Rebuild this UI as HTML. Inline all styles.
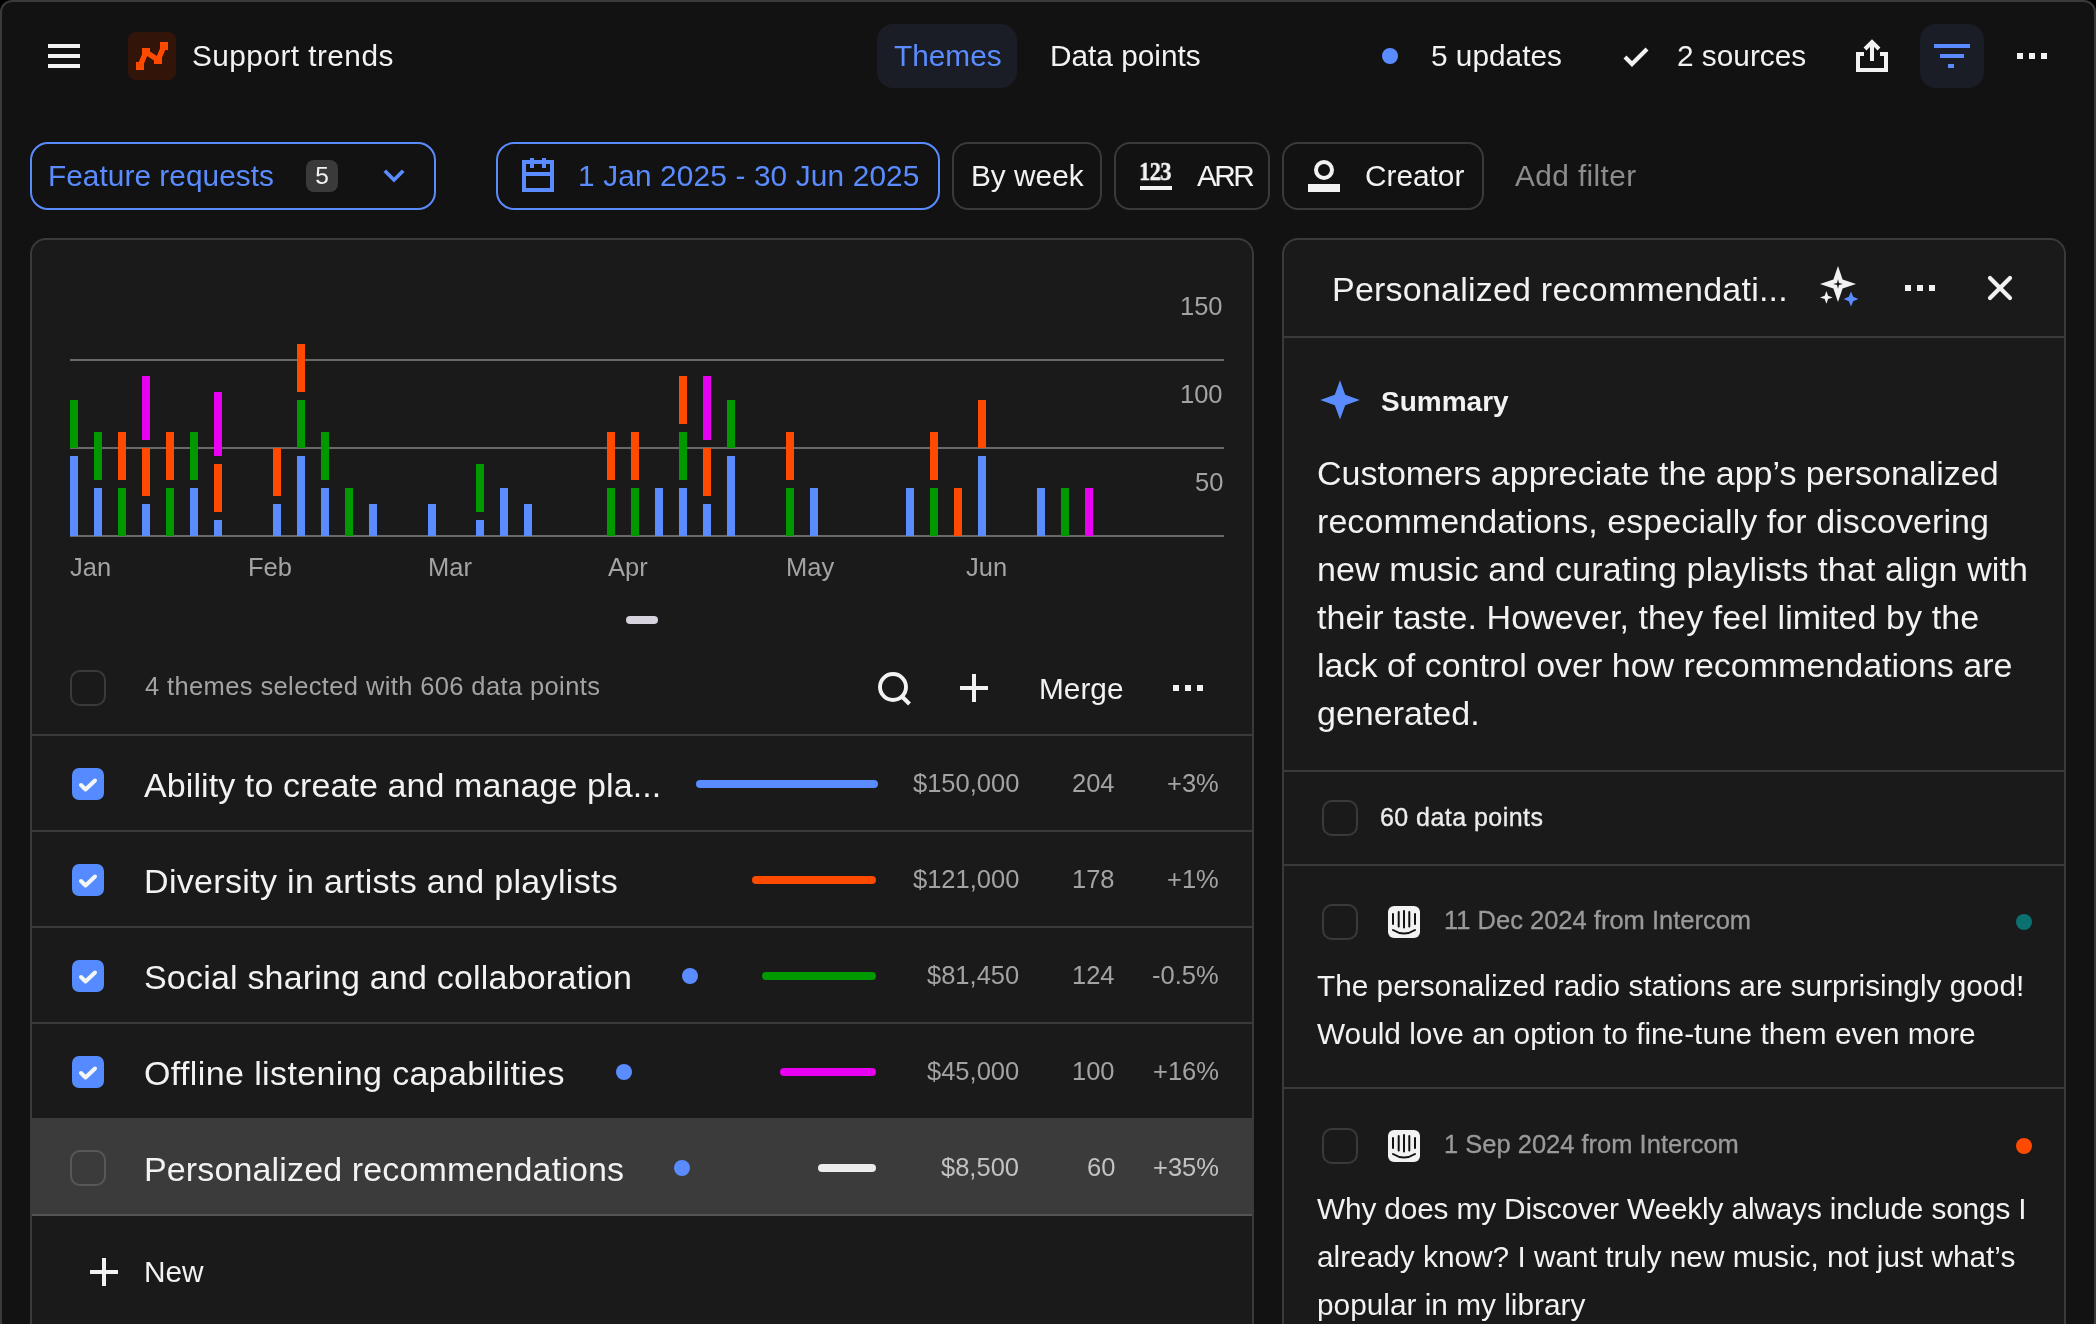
<!DOCTYPE html>
<html><head><meta charset="utf-8">
<style>
html,body{margin:0;padding:0;background:#000;}
body{width:2096px;height:1324px;overflow:hidden;position:relative;font-family:"Liberation Sans",sans-serif;}
#win{position:absolute;left:0;top:0;width:2092px;height:1360px;border:2px solid #3a3a3a;border-radius:12px;background:#121212;overflow:hidden;}
.t{position:absolute;white-space:nowrap;line-height:1;will-change:transform;}
.r{position:absolute;}
i{position:absolute;width:8px;}
</style></head><body>
<div id="win"></div>
<div class="r" style="left:48px;top:44px;width:32px;height:4px;background:#f2f2f2;"></div>
<div class="r" style="left:48px;top:54px;width:32px;height:4px;background:#f2f2f2;"></div>
<div class="r" style="left:48px;top:64px;width:32px;height:4px;background:#f2f2f2;"></div>
<div class="r" style="left:128px;top:32px;width:48px;height:48px;background:#321409;border-radius:8px;"></div>
<svg class="r" style="left:128px;top:32px" width="48" height="48" viewBox="0 0 48 48"><g fill="#ff4a00"><rect x="8" y="30" width="8" height="8"/><rect x="14" y="16" width="8" height="8"/><rect x="26" y="24" width="8" height="8"/><rect x="32" y="10" width="8" height="8"/></g><polyline points="12,34 18,20 30,28 36,14" fill="none" stroke="#ff4a00" stroke-width="5.5" stroke-linejoin="miter"/></svg>
<div class="t" style="top:40.77px;font-size:29.8px;color:#f2f2f2;letter-spacing:0.45px;left:192px;">Support trends</div>
<div class="r" style="left:877px;top:24px;width:140px;height:64px;background:#1a1d26;border-radius:16px;"></div>
<div class="t" style="top:40.77px;font-size:29.8px;color:#5a8cff;left:894px;">Themes</div>
<div class="t" style="top:40.77px;font-size:29.8px;color:#f2f2f2;left:1050px;">Data points</div>
<div class="r" style="left:1382px;top:48px;width:16px;height:16px;background:#5a8cff;border-radius:8px;"></div>
<div class="t" style="top:40.77px;font-size:29.8px;color:#f2f2f2;left:1431px;">5 updates</div>
<svg class="r" style="left:1620px;top:44px" width="32" height="26" viewBox="0 0 32 26"><polyline points="5,13 12,20 27,5" fill="none" stroke="#f2f2f2" stroke-width="4.2"/></svg>
<div class="t" style="top:40.77px;font-size:29.8px;color:#f2f2f2;left:1677px;">2 sources</div>
<svg class="r" style="left:1852px;top:36px" width="40" height="40" viewBox="0 0 40 40"><path d="M12 18 H6 V34 H34 V18 H28" fill="none" stroke="#f2f2f2" stroke-width="4"/><path d="M20 25 V7" stroke="#f2f2f2" stroke-width="4"/><path d="M13 13 L20 6 L27 13" fill="none" stroke="#f2f2f2" stroke-width="4"/></svg>
<div class="r" style="left:1920px;top:24px;width:64px;height:64px;background:#1a1d26;border-radius:16px;"></div>
<div class="r" style="left:1934px;top:44px;width:36px;height:4px;background:#5a8cff;"></div>
<div class="r" style="left:1940px;top:54px;width:24px;height:4px;background:#5a8cff;"></div>
<div class="r" style="left:1948px;top:64px;width:6px;height:4px;background:#5a8cff;"></div>
<div class="r" style="left:2017px;top:53px;width:6px;height:6px;background:#f2f2f2;"></div>
<div class="r" style="left:2029px;top:53px;width:6px;height:6px;background:#f2f2f2;"></div>
<div class="r" style="left:2041px;top:53px;width:6px;height:6px;background:#f2f2f2;"></div>
<div class="r" style="left:30px;top:142px;width:402px;height:64px;border:2px solid #5a8cff;border-radius:18px;background:transparent"></div>
<div class="t" style="top:160.77px;font-size:29.8px;color:#5a8cff;letter-spacing:0.05px;left:48px;">Feature requests</div>
<div class="r" style="left:306px;top:160px;width:32px;height:32px;background:#3a3a3a;border-radius:8px;"></div>
<div class="t" style="top:163.76px;font-size:24.5px;color:#f2f2f2;left:322px;transform:translateX(-50%);">5</div>
<svg class="r" style="left:380px;top:164px" width="28" height="24" viewBox="0 0 28 24"><polyline points="4.8,6.8 14,16 23.2,6.8" fill="none" stroke="#5a8cff" stroke-width="3.7"/></svg>
<div class="r" style="left:496px;top:142px;width:440px;height:64px;border:2px solid #5a8cff;border-radius:18px;background:transparent"></div>
<svg class="r" style="left:520px;top:156px" width="36" height="38" viewBox="0 0 36 38"><rect x="4" y="6" width="28" height="28" fill="none" stroke="#5a8cff" stroke-width="4"/><rect x="4" y="16" width="28" height="4" fill="#5a8cff"/><rect x="10" y="2" width="4" height="10" fill="#5a8cff"/><rect x="22" y="2" width="4" height="10" fill="#5a8cff"/></svg>
<div class="t" style="top:160.77px;font-size:29.8px;color:#5a8cff;letter-spacing:0.15px;left:578px;">1 Jan 2025 - 30 Jun 2025</div>
<div class="r" style="left:952px;top:142px;width:146px;height:64px;border:2px solid #3a3a3a;border-radius:16px;background:transparent"></div>
<div class="t" style="top:160.77px;font-size:29.8px;color:#f2f2f2;left:971px;">By week</div>
<div class="r" style="left:1114px;top:142px;width:152px;height:64px;border:2px solid #3a3a3a;border-radius:16px;background:transparent"></div>
<div class="t" style="top:158.99px;font-size:26px;color:#f2f2f2;font-weight:700;left:1139px;font-family:'Liberation Serif',serif;letter-spacing:-0.6px;-webkit-text-stroke:0.5px #f2f2f2;transform:scaleX(0.86);transform-origin:0 0;">123</div>
<div class="r" style="left:1140px;top:186px;width:32px;height:4px;background:#f2f2f2;"></div>
<div class="t" style="top:160.77px;font-size:29.8px;color:#f2f2f2;letter-spacing:-2.6px;left:1197px;">ARR</div>
<div class="r" style="left:1282px;top:142px;width:198px;height:64px;border:2px solid #3a3a3a;border-radius:16px;background:transparent"></div>
<svg class="r" style="left:1306px;top:158px" width="36" height="36" viewBox="0 0 36 36"><circle cx="18" cy="12" r="8" fill="none" stroke="#f2f2f2" stroke-width="4"/><rect x="2" y="26" width="32" height="8" fill="#f2f2f2"/></svg>
<div class="t" style="top:160.77px;font-size:29.8px;color:#f2f2f2;left:1365px;">Creator</div>
<div class="t" style="top:160.77px;font-size:29.8px;color:#8c8c8c;letter-spacing:0.4px;left:1515px;">Add filter</div>
<div class="r" style="left:30px;top:238px;width:1220px;height:1116px;border:2px solid #3a3a3a;border-radius:16px;background:#1a1a1a"></div>
<div class="r" style="left:70px;top:359px;width:1154px;height:2px;background:#686868;"></div>
<div class="r" style="left:70px;top:447px;width:1154px;height:2px;background:#686868;"></div>
<div class="r" style="left:70px;top:535px;width:1154px;height:2px;background:#686868;"></div>
<div class="t" style="top:294.41px;font-size:25.5px;color:#a3a3a3;right:873px;">150</div>
<div class="t" style="top:382.41px;font-size:25.5px;color:#a3a3a3;right:873px;">100</div>
<div class="t" style="top:470.41px;font-size:25.5px;color:#a3a3a3;right:873px;">50</div>
<i style="left:70px;top:456px;height:80px;background:#5a8cff"></i>
<i style="left:70px;top:400px;height:48px;background:#009a00"></i>
<i style="left:94px;top:488px;height:48px;background:#5a8cff"></i>
<i style="left:94px;top:432px;height:48px;background:#009a00"></i>
<i style="left:118px;top:488px;height:48px;background:#009a00"></i>
<i style="left:118px;top:432px;height:48px;background:#ff4a00"></i>
<i style="left:142px;top:504px;height:32px;background:#5a8cff"></i>
<i style="left:142px;top:448px;height:48px;background:#ff4a00"></i>
<i style="left:142px;top:376px;height:64px;background:#e800f0"></i>
<i style="left:166px;top:488px;height:48px;background:#009a00"></i>
<i style="left:166px;top:432px;height:48px;background:#ff4a00"></i>
<i style="left:190px;top:488px;height:48px;background:#5a8cff"></i>
<i style="left:190px;top:432px;height:48px;background:#009a00"></i>
<i style="left:214px;top:520px;height:16px;background:#5a8cff"></i>
<i style="left:214px;top:464px;height:48px;background:#ff4a00"></i>
<i style="left:214px;top:392px;height:64px;background:#e800f0"></i>
<i style="left:273px;top:504px;height:32px;background:#5a8cff"></i>
<i style="left:273px;top:448px;height:48px;background:#ff4a00"></i>
<i style="left:297px;top:456px;height:80px;background:#5a8cff"></i>
<i style="left:297px;top:400px;height:48px;background:#009a00"></i>
<i style="left:297px;top:344px;height:48px;background:#ff4a00"></i>
<i style="left:321px;top:488px;height:48px;background:#5a8cff"></i>
<i style="left:321px;top:432px;height:48px;background:#009a00"></i>
<i style="left:345px;top:488px;height:48px;background:#009a00"></i>
<i style="left:369px;top:504px;height:32px;background:#5a8cff"></i>
<i style="left:428px;top:504px;height:32px;background:#5a8cff"></i>
<i style="left:476px;top:520px;height:16px;background:#5a8cff"></i>
<i style="left:476px;top:464px;height:48px;background:#009a00"></i>
<i style="left:500px;top:488px;height:48px;background:#5a8cff"></i>
<i style="left:524px;top:504px;height:32px;background:#5a8cff"></i>
<i style="left:607px;top:488px;height:48px;background:#009a00"></i>
<i style="left:607px;top:432px;height:48px;background:#ff4a00"></i>
<i style="left:631px;top:488px;height:48px;background:#009a00"></i>
<i style="left:631px;top:432px;height:48px;background:#ff4a00"></i>
<i style="left:655px;top:488px;height:48px;background:#5a8cff"></i>
<i style="left:679px;top:488px;height:48px;background:#5a8cff"></i>
<i style="left:679px;top:432px;height:48px;background:#009a00"></i>
<i style="left:679px;top:376px;height:48px;background:#ff4a00"></i>
<i style="left:703px;top:504px;height:32px;background:#5a8cff"></i>
<i style="left:703px;top:448px;height:48px;background:#ff4a00"></i>
<i style="left:703px;top:376px;height:64px;background:#e800f0"></i>
<i style="left:727px;top:456px;height:80px;background:#5a8cff"></i>
<i style="left:727px;top:400px;height:48px;background:#009a00"></i>
<i style="left:786px;top:488px;height:48px;background:#009a00"></i>
<i style="left:786px;top:432px;height:48px;background:#ff4a00"></i>
<i style="left:810px;top:488px;height:48px;background:#5a8cff"></i>
<i style="left:906px;top:488px;height:48px;background:#5a8cff"></i>
<i style="left:930px;top:488px;height:48px;background:#009a00"></i>
<i style="left:930px;top:432px;height:48px;background:#ff4a00"></i>
<i style="left:954px;top:488px;height:48px;background:#ff4a00"></i>
<i style="left:978px;top:456px;height:80px;background:#5a8cff"></i>
<i style="left:978px;top:400px;height:48px;background:#ff4a00"></i>
<i style="left:1037px;top:488px;height:48px;background:#5a8cff"></i>
<i style="left:1061px;top:488px;height:48px;background:#009a00"></i>
<i style="left:1085px;top:488px;height:48px;background:#e800f0"></i>

<div class="t" style="top:554.91px;font-size:25.5px;color:#a3a3a3;left:70px;">Jan</div>
<div class="t" style="top:554.91px;font-size:25.5px;color:#a3a3a3;left:248px;">Feb</div>
<div class="t" style="top:554.91px;font-size:25.5px;color:#a3a3a3;left:428px;">Mar</div>
<div class="t" style="top:554.91px;font-size:25.5px;color:#a3a3a3;left:608px;">Apr</div>
<div class="t" style="top:554.91px;font-size:25.5px;color:#a3a3a3;left:786px;">May</div>
<div class="t" style="top:554.91px;font-size:25.5px;color:#a3a3a3;left:966px;">Jun</div>
<div class="r" style="left:626px;top:616px;width:32px;height:8px;background:#d6d3dc;border-radius:4px;"></div>
<div class="r" style="left:70px;top:670px;width:32px;height:32px;border:2px solid #3a3a3a;border-radius:10px;background:transparent"></div>
<div class="t" style="top:674.41px;font-size:25.5px;color:#a3a3a3;letter-spacing:0.38px;left:145px;">4 themes selected with 606 data points</div>
<svg class="r" style="left:872px;top:668px" width="44" height="40" viewBox="0 0 44 40"><circle cx="21" cy="19" r="13" fill="none" stroke="#f2f2f2" stroke-width="3.9"/><path d="M30 28.5 L37.5 36" stroke="#f2f2f2" stroke-width="4"/></svg>
<svg class="r" style="left:958px;top:672px" width="32" height="32" viewBox="0 0 32 32"><path d="M16 2 V30 M2 16 H30" stroke="#f2f2f2" stroke-width="4"/></svg>
<div class="t" style="top:673.77px;font-size:29.8px;color:#f2f2f2;left:1039px;">Merge</div>
<div class="r" style="left:1173px;top:685px;width:6px;height:6px;background:#f2f2f2;"></div>
<div class="r" style="left:1185px;top:685px;width:6px;height:6px;background:#f2f2f2;"></div>
<div class="r" style="left:1197px;top:685px;width:6px;height:6px;background:#f2f2f2;"></div>
<div class="r" style="left:32px;top:734px;width:1220px;height:2px;background:#3a3a3a;"></div>
<div class="r" style="left:32px;top:830px;width:1220px;height:2px;background:#3a3a3a;"></div>
<div class="r" style="left:32px;top:926px;width:1220px;height:2px;background:#3a3a3a;"></div>
<div class="r" style="left:32px;top:1022px;width:1220px;height:2px;background:#3a3a3a;"></div>
<div class="r" style="left:32px;top:1118px;width:1220px;height:2px;background:#3a3a3a;"></div>
<div class="r" style="left:32px;top:1118px;width:1220px;height:96px;background:#3b3b3b;"></div>
<div class="r" style="left:32px;top:1214px;width:1220px;height:2px;background:#545454;"></div>
<div class="r" style="left:72px;top:768px;width:32px;height:32px;background:#558bff;border-radius:7px;"></div>
<svg class="r" style="left:72px;top:768px" width="32" height="32" viewBox="0 0 32 32"><polyline points="9,17 13.5,21.5 23,12.5" fill="none" stroke="#f5f5f5" stroke-width="4" stroke-linecap="round" stroke-linejoin="round"/></svg>
<div class="t" style="top:767.72px;font-size:34.0px;color:#f2f2f2;letter-spacing:0.09px;left:144px;">Ability to create and manage pla...</div>
<div class="r" style="left:696px;top:780px;width:182px;height:8px;background:#5a8cff;border-radius:4px;"></div>
<div class="t" style="top:771.41px;font-size:25.5px;color:#a3a3a3;right:1077px;">$150,000</div>
<div class="t" style="top:771.41px;font-size:25.5px;color:#a3a3a3;right:981px;">204</div>
<div class="t" style="top:771.41px;font-size:25.5px;color:#a3a3a3;right:877px;">+3%</div>
<div class="r" style="left:72px;top:864px;width:32px;height:32px;background:#558bff;border-radius:7px;"></div>
<svg class="r" style="left:72px;top:864px" width="32" height="32" viewBox="0 0 32 32"><polyline points="9,17 13.5,21.5 23,12.5" fill="none" stroke="#f5f5f5" stroke-width="4" stroke-linecap="round" stroke-linejoin="round"/></svg>
<div class="t" style="top:863.72px;font-size:34.0px;color:#f2f2f2;letter-spacing:0.33px;left:144px;">Diversity in artists and playlists</div>
<div class="r" style="left:752px;top:876px;width:124px;height:8px;background:#ff4a00;border-radius:4px;"></div>
<div class="t" style="top:867.41px;font-size:25.5px;color:#a3a3a3;right:1077px;">$121,000</div>
<div class="t" style="top:867.41px;font-size:25.5px;color:#a3a3a3;right:981px;">178</div>
<div class="t" style="top:867.41px;font-size:25.5px;color:#a3a3a3;right:877px;">+1%</div>
<div class="r" style="left:72px;top:960px;width:32px;height:32px;background:#558bff;border-radius:7px;"></div>
<svg class="r" style="left:72px;top:960px" width="32" height="32" viewBox="0 0 32 32"><polyline points="9,17 13.5,21.5 23,12.5" fill="none" stroke="#f5f5f5" stroke-width="4" stroke-linecap="round" stroke-linejoin="round"/></svg>
<div class="t" style="top:959.72px;font-size:34.0px;color:#f2f2f2;letter-spacing:0.19px;left:144px;">Social sharing and collaboration</div>
<div class="r" style="left:682px;top:968px;width:16px;height:16px;background:#5a8cff;border-radius:8px;"></div>
<div class="r" style="left:762px;top:972px;width:114px;height:8px;background:#009a00;border-radius:4px;"></div>
<div class="t" style="top:963.41px;font-size:25.5px;color:#a3a3a3;right:1077px;">$81,450</div>
<div class="t" style="top:963.41px;font-size:25.5px;color:#a3a3a3;right:981px;">124</div>
<div class="t" style="top:963.41px;font-size:25.5px;color:#a3a3a3;right:877px;">-0.5%</div>
<div class="r" style="left:72px;top:1056px;width:32px;height:32px;background:#558bff;border-radius:7px;"></div>
<svg class="r" style="left:72px;top:1056px" width="32" height="32" viewBox="0 0 32 32"><polyline points="9,17 13.5,21.5 23,12.5" fill="none" stroke="#f5f5f5" stroke-width="4" stroke-linecap="round" stroke-linejoin="round"/></svg>
<div class="t" style="top:1055.72px;font-size:34.0px;color:#f2f2f2;letter-spacing:0.38px;left:144px;">Offline listening capabilities</div>
<div class="r" style="left:616px;top:1064px;width:16px;height:16px;background:#5a8cff;border-radius:8px;"></div>
<div class="r" style="left:780px;top:1068px;width:96px;height:8px;background:#e800f0;border-radius:4px;"></div>
<div class="t" style="top:1059.41px;font-size:25.5px;color:#a3a3a3;right:1077px;">$45,000</div>
<div class="t" style="top:1059.41px;font-size:25.5px;color:#a3a3a3;right:981px;">100</div>
<div class="t" style="top:1059.41px;font-size:25.5px;color:#a3a3a3;right:877px;">+16%</div>
<div class="r" style="left:70px;top:1150px;width:32px;height:32px;border:2px solid #585858;border-radius:10px;background:transparent"></div>
<div class="t" style="top:1151.72px;font-size:34.0px;color:#f2f2f2;letter-spacing:0.14px;left:144px;">Personalized recommendations</div>
<div class="r" style="left:674px;top:1160px;width:16px;height:16px;background:#5a8cff;border-radius:8px;"></div>
<div class="r" style="left:818px;top:1164px;width:58px;height:8px;background:#ececec;border-radius:4px;"></div>
<div class="t" style="top:1155.41px;font-size:25.5px;color:#c2c2c2;right:1077px;">$8,500</div>
<div class="t" style="top:1155.41px;font-size:25.5px;color:#c2c2c2;right:981px;">60</div>
<div class="t" style="top:1155.41px;font-size:25.5px;color:#c2c2c2;right:877px;">+35%</div>
<svg class="r" style="left:88px;top:1256px" width="32" height="32" viewBox="0 0 32 32"><path d="M16 2 V30 M2 16 H30" stroke="#f2f2f2" stroke-width="4"/></svg>
<div class="t" style="top:1256.77px;font-size:29.8px;color:#f2f2f2;left:144px;">New</div>
<div class="r" style="left:1282px;top:238px;width:780px;height:1116px;border:2px solid #3a3a3a;border-radius:16px;background:#1a1a1a"></div>
<div class="t" style="top:272.22px;font-size:34.0px;color:#f2f2f2;letter-spacing:0.22px;left:1332px;">Personalized recommendati...</div>
<svg class="r" style="left:1816px;top:262px" width="48" height="48" viewBox="0 0 48 48"><path d="M22.00 4.00 L26.60 17.40 L40.00 22.00 L26.60 26.60 L22.00 40.00 L17.40 26.60 L4.00 22.00 L17.40 17.40Z" fill="#f2f2f2"/><path d="M22.00 17.20 L23.00 21.00 L26.80 22.00 L23.00 23.00 L22.00 26.80 L21.00 23.00 L17.20 22.00 L21.00 21.00Z" fill="#1a1a1a"/><path d="M10.40 29.00 L12.10 33.70 L16.80 35.40 L12.10 37.10 L10.40 41.80 L8.70 37.10 L4.00 35.40 L8.70 33.70Z" fill="#f2f2f2"/><path d="M35.00 29.60 L37.20 34.80 L42.40 37.00 L37.20 39.20 L35.00 44.40 L32.80 39.20 L27.60 37.00 L32.80 34.80Z" fill="#5a8cff"/></svg>
<div class="r" style="left:1905px;top:285px;width:6px;height:6px;background:#f2f2f2;"></div>
<div class="r" style="left:1917px;top:285px;width:6px;height:6px;background:#f2f2f2;"></div>
<div class="r" style="left:1929px;top:285px;width:6px;height:6px;background:#f2f2f2;"></div>
<svg class="r" style="left:1984px;top:272px" width="32" height="32" viewBox="0 0 32 32"><path d="M6 6 L26 26 M26 6 L6 26" stroke="#f2f2f2" stroke-width="4.2" stroke-linecap="round"/></svg>
<div class="r" style="left:1284px;top:336px;width:780px;height:2px;background:#3a3a3a;"></div>
<svg class="r" style="left:1320px;top:380px" width="40" height="40" viewBox="0 0 40 40"><path d="M20 0.2 L25.2 14.8 L39.8 20 L25.2 25.2 L20 39.6 L14.8 25.2 L0.2 20 L14.8 14.8Z" fill="#5a8cff"/></svg>
<div class="t" style="top:387.60px;font-size:28px;color:#f2f2f2;font-weight:700;left:1381px;">Summary</div>
<div class="t" style="top:455.92px;font-size:34.0px;color:#f2f2f2;letter-spacing:0px;left:1317px;">Customers appreciate the app’s personalized</div>
<div class="t" style="top:503.92px;font-size:34.0px;color:#f2f2f2;letter-spacing:0.07px;left:1317px;">recommendations, especially for discovering</div>
<div class="t" style="top:551.92px;font-size:34.0px;color:#f2f2f2;letter-spacing:0.13px;left:1317px;">new music and curating playlists that align with</div>
<div class="t" style="top:599.92px;font-size:34.0px;color:#f2f2f2;letter-spacing:0.1px;left:1317px;">their taste. However, they feel limited by the</div>
<div class="t" style="top:647.92px;font-size:34.0px;color:#f2f2f2;letter-spacing:0px;left:1317px;">lack of control over how recommendations are</div>
<div class="t" style="top:695.92px;font-size:34.0px;color:#f2f2f2;letter-spacing:0px;left:1317px;">generated.</div>
<div class="r" style="left:1284px;top:770px;width:780px;height:2px;background:#3a3a3a;"></div>
<div class="r" style="left:1322px;top:800px;width:32px;height:32px;border:2px solid #3a3a3a;border-radius:10px;background:transparent"></div>
<div class="t" style="top:805.24px;font-size:25px;color:#ececec;letter-spacing:0.45px;left:1380px;-webkit-text-stroke:0.35px #ececec;">60 data points</div>
<div class="r" style="left:1284px;top:864px;width:780px;height:2px;background:#3a3a3a;"></div>
<div class="r" style="left:1322px;top:904px;width:32px;height:32px;border:2px solid #3a3a3a;border-radius:10px;background:transparent"></div>
<svg class="r" style="left:1388px;top:906px" width="32" height="32" viewBox="0 0 32 32"><rect x="0" y="0" width="32" height="32" rx="6" fill="#f2f2f2"/><g stroke="#111" stroke-width="2" stroke-linecap="round"><path d="M5 8 V18"/><path d="M10.7 6 V20.5"/><path d="M16 5 V21.5"/><path d="M21.3 6 V20.5"/><path d="M27 8 V18"/></g><path d="M5 24 Q16 31 27 24" fill="none" stroke="#111" stroke-width="2" stroke-linecap="round"/></svg>
<div class="t" style="top:908.41px;font-size:25.5px;color:#9a9a9a;left:1444px;-webkit-text-stroke:0.3px #9a9a9a;">11 Dec 2024 from Intercom</div>
<div class="r" style="left:2016px;top:914px;width:16px;height:16px;background:#0b7070;border-radius:8px;"></div>
<div class="t" style="top:971.27px;font-size:29.8px;color:#f2f2f2;left:1317px;">The personalized radio stations are surprisingly good!</div>
<div class="t" style="top:1019.27px;font-size:29.8px;color:#f2f2f2;left:1317px;">Would love an option to fine-tune them even more</div>
<div class="r" style="left:1284px;top:1087px;width:780px;height:2px;background:#3a3a3a;"></div>
<div class="r" style="left:1322px;top:1128px;width:32px;height:32px;border:2px solid #3a3a3a;border-radius:10px;background:transparent"></div>
<svg class="r" style="left:1388px;top:1130px" width="32" height="32" viewBox="0 0 32 32"><rect x="0" y="0" width="32" height="32" rx="6" fill="#f2f2f2"/><g stroke="#111" stroke-width="2" stroke-linecap="round"><path d="M5 8 V18"/><path d="M10.7 6 V20.5"/><path d="M16 5 V21.5"/><path d="M21.3 6 V20.5"/><path d="M27 8 V18"/></g><path d="M5 24 Q16 31 27 24" fill="none" stroke="#111" stroke-width="2" stroke-linecap="round"/></svg>
<div class="t" style="top:1132.41px;font-size:25.5px;color:#9a9a9a;left:1444px;-webkit-text-stroke:0.3px #9a9a9a;">1 Sep 2024 from Intercom</div>
<div class="r" style="left:2016px;top:1138px;width:16px;height:16px;background:#ff4a00;border-radius:8px;"></div>
<div class="t" style="top:1194.17px;font-size:29.8px;color:#f2f2f2;letter-spacing:-0.14px;left:1317px;">Why does my Discover Weekly always include songs I</div>
<div class="t" style="top:1242.17px;font-size:29.8px;color:#f2f2f2;letter-spacing:0px;left:1317px;">already know? I want truly new music, not just what’s</div>
<div class="t" style="top:1290.17px;font-size:29.8px;color:#f2f2f2;letter-spacing:0px;left:1317px;">popular in my library</div>
</body></html>
